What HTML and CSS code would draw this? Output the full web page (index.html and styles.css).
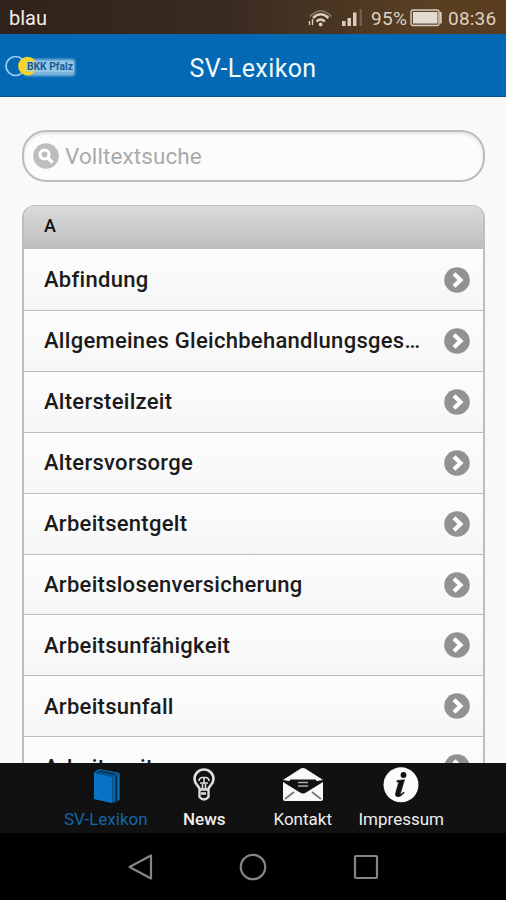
FILE: index.html
```html
<!DOCTYPE html>
<html lang="de">
<head>
<meta charset="utf-8">
<title>SV-Lexikon</title>
<link rel="stylesheet" href="styles.css">
</head>
<body>
<svg class="defs" width="0" height="0">
  <symbol id="arrow" viewBox="0 0 26 26">
    <circle cx="13" cy="13" r="12.8" fill="#929292"/>
    <path d="M10 6.8l6.5 6.2-6.5 6.2" fill="none" stroke="#fff" stroke-width="4.2"/>
  </symbol>
</svg>
<div class="phone">
  <div class="status">
    <span class="carrier">blau</span>
    <svg class="wifi" viewBox="0 0 26 20" fill="none" stroke="#d9cdbf">
      <path d="M2 8.5Q12.500-2.500 23.500 8.500" stroke="#8d7b6b" stroke-width="1.700"/>
      <path d="M5 10Q12.500 2.500 20.500 10M8.500 13.500Q12.500 9.500 16.800 13.500" stroke-width="2.500"/>
      <circle cx="12.600" cy="16.500" r="1.900" fill="#d9cdbf" stroke="none"/>
      <path d="M4.500 11v6M1.500 13v4" stroke-width="1.400"/>
    </svg>
    <svg class="signal" viewBox="0 0 22 20" fill="#d9cdbf">
      <path d="M1 13h3.500v5H1zM6.500 10H10v8H6.500zM12 4.500h3.500V18H12z"/>
      <path d="M18.500 1H21v17h-2.500z" fill="#765f4a"/>
    </svg>
    <span class="percent">95%</span>
    <svg class="battery" viewBox="0 0 33 18">
      <rect x="1" y="1" width="28" height="15.500" rx="2" fill="#58483a" stroke="#d9cdbf" stroke-width="1.400"/>
      <rect x="3" y="3" width="24.500" height="11.500" fill="#e3dbd0"/>
      <path d="M29.500 3h2.200v11.500h-2.200" fill="#d9cdbf"/>
    </svg>
    <span class="clock">08:36</span>
  </div>
  <header class="header">
    <svg class="logo" viewBox="0 0 78 28">
      <defs><filter id="glow" x="-20%" y="-40%" width="140%" height="180%"><feGaussianBlur stdDeviation="1.3"/></filter></defs>
      <rect x="24" y="7" width="51" height="17" rx="3" fill="#a4d0ec" opacity=".75" filter="url(#glow)"/>
      <circle cx="15.500" cy="14" r="9.500" fill="#0769b3" stroke="#9ccbed" stroke-width="1.700"/>
      <circle cx="27.500" cy="14" r="9.300" fill="#fad524"/>
      <rect x="26" y="9" width="48" height="11" rx="2" fill="#a4d0ec" opacity=".6"/>
      <text x="27" y="18" textLength="46" lengthAdjust="spacingAndGlyphs" class="logo-text">BKK Pfalz</text>
    </svg>
    <h1 class="title">SV-Lexikon</h1>
  </header>
  <main class="content">
    <div class="search">
      <svg class="search-icon" viewBox="0 0 26 26">
        <circle cx="13" cy="13" r="12.800" fill="#bdbdbd"/>
        <circle cx="11.500" cy="11.500" r="4.500" fill="none" stroke="#fff" stroke-width="3"/>
        <path d="M14.500 14.500l5 5" stroke="#fff" stroke-width="3.400"/>
      </svg>
      <span class="placeholder">Volltextsuche</span>
    </div>
    <div class="list">
      <div class="divider">A</div>
      <div class="row"><span class="label">Abfindung</span><svg class="arrow"><use href="#arrow"/></svg></div>
      <div class="row"><span class="label">Allgemeines Gleichbehandlungsges…</span><svg class="arrow"><use href="#arrow"/></svg></div>
      <div class="row"><span class="label">Altersteilzeit</span><svg class="arrow"><use href="#arrow"/></svg></div>
      <div class="row"><span class="label">Altersvorsorge</span><svg class="arrow"><use href="#arrow"/></svg></div>
      <div class="row"><span class="label">Arbeitsentgelt</span><svg class="arrow"><use href="#arrow"/></svg></div>
      <div class="row"><span class="label">Arbeitslosenversicherung</span><svg class="arrow"><use href="#arrow"/></svg></div>
      <div class="row"><span class="label">Arbeitsunfähigkeit</span><svg class="arrow"><use href="#arrow"/></svg></div>
      <div class="row"><span class="label">Arbeitsunfall</span><svg class="arrow"><use href="#arrow"/></svg></div>
      <div class="row"><span class="label">Arbeitszeit</span><svg class="arrow"><use href="#arrow"/></svg></div>
    </div>
  </main>
  <nav class="tabs">
    <div class="tab active">
      <svg class="tab-icon" viewBox="0 0 42 38">
        <path d="M9 6l5-3 21 4v27l-7 3-19-4z" fill="#064f88"/>
        <path d="M9 7l18 4v26L9 33z" fill="#0873c4"/>
        <path d="M10 6.500l5-2.500 18 3.500M29 10v25M33.500 9v25" fill="none" stroke="#0b70bb" stroke-width="1.300"/>
        <path d="M12 6.500l4-1.500 14 3M31.200 10v25" fill="none" stroke="#082d4b" stroke-width="1.500"/>
      </svg>
      <span>SV-Lexikon</span>
    </div>
    <div class="tab strong">
      <svg class="tab-icon" viewBox="0 0 42 38" fill="none" stroke="#dedede">
        <path d="M16.500 23c0-3-5-4.500-5-10a9.500 9.500 0 0 1 19 0c0 5.500-5 7-5 10" stroke-width="2.600"/>
        <path d="M19.500 24v-6M22.500 24v-6M16 15q0-3 3-3.500h4q3 .5 3 3.500M17 17h8M21 12v6" stroke-width="1.600"/>
        <path d="M16.500 23.500h9v7.500q-4.500 5-9 0zM18 27.500h5" stroke-width="2.400"/>
      </svg>
      <span>News</span>
    </div>
    <div class="tab">
      <svg class="tab-icon" viewBox="0 0 42 38">
        <path d="M1 14L18 3q3-2 6 0l17 11v19q0 2-2 2H3q-2 0-2-2z" fill="#f8f8f8"/>
        <path d="M1 14l6 1v-1.500h28V15l6-1v2L24 26.500q-3 2-6 0L1 16z" fill="#111"/>
        <path d="M3 13l5-3v5zM39 13l-5-3v5z" fill="#f8f8f8"/>
        <path d="M16 16.500h10M16 20h10" stroke="#aaa" stroke-width="1.700"/>
        <path d="M3 33l9-7M39 33l-9-7" stroke="#777" stroke-width="1.700"/>
      </svg>
      <span>Kontakt</span>
    </div>
    <div class="tab">
      <svg class="tab-icon" viewBox="0 0 42 38">
        <circle cx="21" cy="18.800" r="17.500" fill="#fbfbfb"/>
        <circle cx="23.500" cy="9" r="2.900" fill="#111"/>
        <path d="M17 14.500l7.500-.8-4 13.500q-.3 1.500 1 .8l2-2 .8.800q-4 4.600-7 4-2.600-.6-1.600-4l3-10.500-2-.5z" fill="#111" stroke="#111" stroke-width=".6"/>
      </svg>
      <span>Impressum</span>
    </div>
  </nav>
  <div class="navbar">
    <svg class="key" viewBox="0 0 28 28"><path d="M25 2.500v23L3.500 14z"/></svg>
    <svg class="key" viewBox="0 0 28 28"><circle cx="14" cy="14" r="12.200"/></svg>
    <svg class="key" viewBox="0 0 28 28"><rect x="3" y="3" width="22" height="22" rx="1"/></svg>
  </div>
</div>
</body>
</html>
```
FILE: styles.css
```css
* { box-sizing: border-box; }
body { margin: 0; font-family: Roboto, "Liberation Sans", sans-serif; }
svg { display: block; flex: none; }
.defs { position: absolute; }
.phone { width: 506px; height: 900px; display: flex; flex-direction: column; overflow: hidden; background: #000; }
.status { height: 34px; flex: none; display: flex; align-items: center; padding: 2px 8px 0 9px; background: linear-gradient(90deg, #30221a, #3a2b21 45%, #5a3f23 85%, #593c20); color: #dcd0c2; font-size: 19px; }
.carrier { margin-right: auto; color: #f1eeeb; font-size: 20px; }
.wifi { width: 26px; height: 20px; margin-right: 7px; }
.signal { width: 22px; height: 20px; margin-right: 8px; }
.percent { width: 39px; letter-spacing: .3px; }
.battery { width: 33px; height: 18px; margin-right: 5px; }
.clock { width: 50px; letter-spacing: .2px; }
.header { height: 63px; flex: none; display: grid; grid-template-columns: 80px 1fr 80px; align-items: center; background: #0369b4; border-bottom: 1px solid #07528c; }
.logo { width: 78px; height: 28px; margin-top: 2px; }
.logo-text { font-size: 11.500px; font-weight: 700; fill: #185a96; }
.title { margin: 7px 0 0; color: #f3f9fd; font-size: 25px; font-weight: 400; line-height: 30px; text-align: center; letter-spacing: .4px; }
.content { height: 666px; flex: none; padding: 33px 21px 0 22px; background: #f9f9f9; overflow: hidden; }
.search { height: 52px; display: flex; align-items: center; gap: 6px; padding-left: 9px; border: 2px solid #bcbcbc; border-radius: 24px; box-shadow: inset 0 2px 3px #e4e4e4; background: #fcfcfc; }
.search-icon { width: 26px; height: 26px; }
.placeholder { color: #aaa; font-size: 22.500px; letter-spacing: .1px; }
.list { margin-top: 23px; border: 2px solid #bebebe; border-top-width: 1px; border-radius: 13px 13px 0 0; overflow: hidden; }
.divider { height: 43px; padding-left: 20px; background: linear-gradient(#dbdbdb, #bdbdbd); color: #111; font-size: 18px; font-weight: 500; line-height: 40px; }
.row { height: 60.9px; display: flex; align-items: center; justify-content: space-between; padding: 0 13px 0 20px; border-bottom: 1px solid #bcbcbc; background: linear-gradient(#fdfdfd, #f6f6f6); }
.divider + .row { height: 62px; }
.label { color: #1b1b1b; font-size: 22px; font-weight: 500; letter-spacing: .28px; white-space: nowrap; }
.arrow { width: 26px; height: 26px; }
.tabs { height: 70px; flex: none; display: grid; grid-template-columns: repeat(4, 98.500px); justify-content: center; padding-left: 1px; background: #111; color: #eee; font-size: 17px; }
.tab { display: flex; flex-direction: column; align-items: center; padding-top: 3px; line-height: 22px; }
.tab-icon { width: 42px; height: 38px; margin-bottom: 4px; }
.active { color: #1467aa; }
.strong { font-weight: 500; }
.navbar { height: 67px; flex: none; display: flex; justify-content: center; align-items: center; gap: 85px; background: #000; }
.key { width: 28px; height: 28px; fill: none; stroke: #858585; stroke-width: 2.200; stroke-linejoin: round; }
```
